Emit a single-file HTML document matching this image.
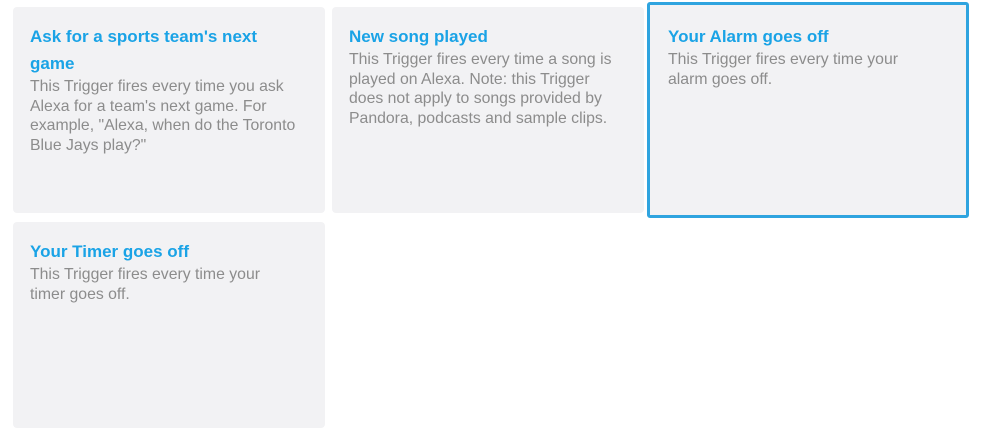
<!DOCTYPE html>
<html><head><style>
body{margin:0;background:#fff;width:1000px;height:441px;position:relative;font-family:"Liberation Sans",sans-serif;overflow:hidden}
.c{position:absolute;background:#f2f2f4;border-radius:4px;box-sizing:border-box;padding:16px 17px}
.t{color:#1aa3e6;font-size:17px;font-weight:bold;line-height:27px;letter-spacing:0px}
.d{color:#8c8c8c;font-size:15.8px;line-height:19.6px;margin-top:0px}
</style></head><body>
<div class="c" style="left:13px;top:7px;width:312px;height:206px"><div class="t">Ask for a sports team's next<br>game</div><div class="d">This Trigger fires every time you ask<br>Alexa for a team's next game. For<br>example, "Alexa, when do the Toronto<br>Blue Jays play?"</div></div>
<div class="c" style="left:332px;top:7px;width:312px;height:206px"><div class="t">New song played</div><div class="d">This Trigger fires every time a song is<br>played on Alexa. Note: this Trigger<br>does not apply to songs provided by<br>Pandora, podcasts and sample clips.</div></div>
<div class="c" style="left:647px;top:2px;width:322px;height:216px;border:3px solid #2fa4df;border-radius:3px;padding:18px 18px"><div class="t">Your Alarm goes off</div><div class="d">This Trigger fires every time your<br>alarm goes off.</div></div>
<div class="c" style="left:13px;top:222px;width:312px;height:206px"><div class="t">Your Timer goes off</div><div class="d">This Trigger fires every time your<br>timer goes off.</div></div>
</body></html>
